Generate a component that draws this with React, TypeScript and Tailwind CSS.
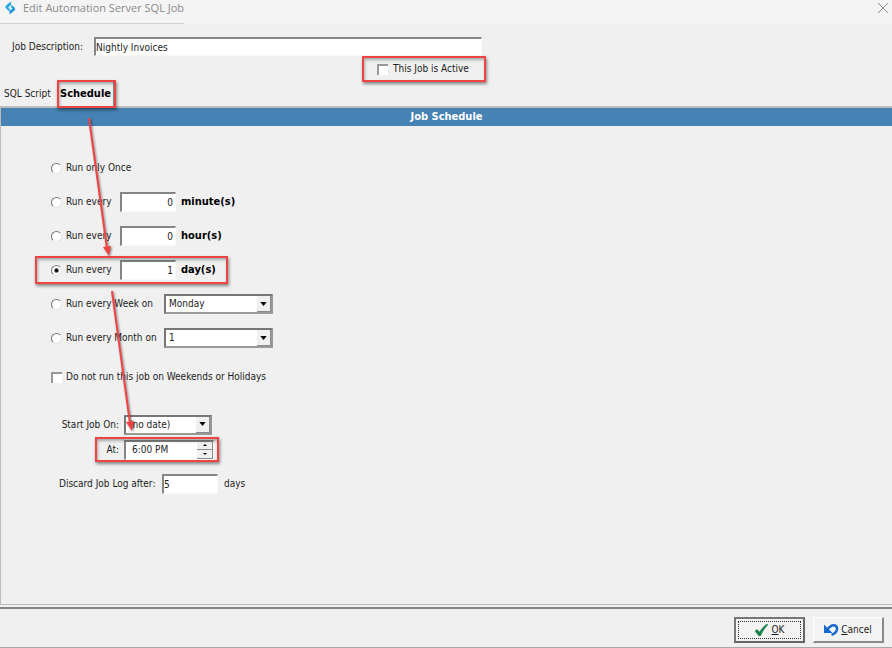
import { useState } from 'react';

const sunken =
  'border-t-2 border-l-2 border-r border-b border-t-[#858585] border-l-[#858585] border-r-[#f8f8f8] border-b-[#f8f8f8] bg-white outline-none';

const radioClass =
  'h-[11px] w-[11px] shrink-0 appearance-none rounded-full border border-t-[#777] border-l-[#777] border-r-[#e4e4e4] border-b-[#e4e4e4] bg-white checked:bg-[radial-gradient(circle,#000_1px,#fff_3px)]';

const checkClass =
  'h-[11px] w-[11px] shrink-0 appearance-none border-t-2 border-l-2 border-t-[#999] border-l-[#999] bg-white checked:bg-[radial-gradient(circle,#000_2px,#fff_3px)]';

// red call-out frame drawn over the control it surrounds
const frame =
  'pointer-events-none absolute z-10 border-2 border-[#f04444] shadow-[1px_2px_3px_rgba(0,0,0,0.45),inset_1px_2px_3px_rgba(0,0,0,0.3)]';

type SelectProps = {
  id: string;
  label: string;
  options: string[];
  className: string;
};

const Select = ({ id, label, options, className }: SelectProps) => (
  <div className={`relative h-5 shrink-0 ${className}`}>
    <select
      id={id}
      aria-label={label}
      className="block h-full w-full appearance-none border-2 border-t-[#777] border-l-[#777] border-r-[#999] border-b-[#999] bg-white pl-[3px] outline-none"
    >
      {options.map((option) => (
        <option key={option}>{option}</option>
      ))}
    </select>
    <span className="pointer-events-none absolute top-[2px] right-[2px] bottom-[2px] flex w-[14px] items-center justify-center border-r border-b border-[#8a8a8a] bg-[#f0f0f0]">
      <svg width="7" height="4" viewBox="0 0 8 5">
        <path d="M0 0h8L4 5z" fill="#000" />
      </svg>
    </span>
  </div>
);

const everyRows = [
  { id: 'minutes', unit: 'minute(s)', value: '0' },
  { id: 'hours', unit: 'hour(s)', value: '0' },
  { id: 'days', unit: 'day(s)', value: '1' },
];

const weekDays = ['Monday', 'Tuesday', 'Wednesday', 'Thursday', 'Friday', 'Saturday', 'Sunday'];
const monthDays = Array.from({ length: 31 }, (_, i) => String(i + 1));

const App: React.FC = () => {
  const [mode, setMode] = useState('days');

  return (
    <div className="relative flex min-h-screen flex-col border-b border-[#a8a8a8] bg-[#f0f0f0] font-['DejaVu_Sans_Condensed','DejaVu_Sans',sans-serif] text-[10px] leading-[14px] text-[#1c1c1c]">
      <header className="flex h-6 items-start justify-between bg-[#f4f4f4]">
        <h1 className="flex h-6 w-[184px] items-center gap-[6px] border-b border-[#d0d0d0] pb-[8px] pl-1 font-['Open_Sans',sans-serif] text-[11px] whitespace-nowrap text-[#8a8a8a]">
          <svg width="13" height="14" viewBox="0 0 13 14" className="shrink-0">
            <path d="M7 0.500L2 4.500Q0.500 6 2 7.500L5.500 10.500L5.800 8.200L4.300 6.300L7 4z" fill="#27a9e1" />
            <path d="M5.500 13.500L10.500 9.500Q12 8 10.500 6.500L7.500 4L7 6L8.400 7.600L5.500 10z" fill="#1b9ad8" />
          </svg>
          Edit Automation Server SQL Job
        </h1>
        <button type="button" aria-label="Close" className="px-1 py-[3px]">
          <svg width="10" height="10" viewBox="0 0 10 10" stroke="#8a8a8a" fill="none">
            <path d="M0 0l10 10M10 0L0 10" />
          </svg>
        </button>
      </header>

      <div className="flex items-center pt-[13px] pl-3">
        <label htmlFor="description" className="w-[82px]">
          Job Description:
        </label>
        <input id="description" defaultValue="Nightly Invoices" className={`h-[19px] w-[388px] ${sunken}`} />
      </div>
      <div className="relative ml-[362px] flex h-[26px] w-[124px] items-center pl-[15px]">
        <label className="flex items-center gap-[5px]">
          <input type="checkbox" className={checkClass} />
          This Job is Active
        </label>
        <span className={`${frame} inset-0`} />
      </div>

      <nav className="flex h-6 pl-1">
        <button type="button" className="w-[56px] text-left">
          SQL Script
        </button>
        <button type="button" className="relative border-r-2 border-[#8a8a8a] pr-[2px] text-[11px] font-bold text-black">
          Schedule
          <span className={`${frame} -inset-x-[3px] -top-[2px] -bottom-[2px]`} />
        </button>
      </nav>

      <main className="flex-1 border-t-2 border-b border-l border-[#bdbdbd]">
        <h2 className="h-[18px] bg-[#4682b4] text-center text-[11px] leading-[18px] font-bold text-white">
          Job Schedule
        </h2>

        <form className="pt-[25px] pl-[50px]">
          <div className="flex h-[34px] items-center">
            <label className="flex items-center gap-1">
              <input
                type="radio"
                name="mode"
                checked={mode === 'once'}
                onChange={() => setMode('once')}
                className={radioClass}
              />
              Run only Once
            </label>
          </div>
          {everyRows.map((row) => (
            <div key={row.id} className="relative flex h-[34px] w-[177px] items-center whitespace-nowrap">
              <label className="flex w-[69px] shrink-0 items-center gap-1">
                <input
                  type="radio"
                  name="mode"
                  checked={mode === row.id}
                  onChange={() => setMode(row.id)}
                  className={radioClass}
                />
                Run every
              </label>
              <input
                id={row.id}
                defaultValue={row.value}
                className={`h-5 w-[56px] shrink-0 pr-[2px] text-right ${sunken}`}
              />
              <label htmlFor={row.id} className="pl-[5px] text-[11px] font-bold text-black">
                {row.unit}
              </label>
              {row.id === 'days' && <span className={`${frame} inset-y-[3px] -left-4 right-0`} />}
            </div>
          ))}
          <div className="flex h-[34px] items-center">
            <label className="flex w-[113px] items-center gap-1 whitespace-nowrap">
              <input
                type="radio"
                name="mode"
                checked={mode === 'week'}
                onChange={() => setMode('week')}
                className={radioClass}
              />
              Run every Week on
            </label>
            <Select id="week" label="Day of week" options={weekDays} className="w-[109px]" />
          </div>
          <div className="flex h-[34px] items-center">
            <label className="flex w-[113px] items-center gap-1 whitespace-nowrap">
              <input
                type="radio"
                name="mode"
                checked={mode === 'month'}
                onChange={() => setMode('month')}
                className={radioClass}
              />
              Run every Month on
            </label>
            <Select id="month" label="Day of month" options={monthDays} className="w-[109px]" />
          </div>

          <div className="mt-[5px] flex h-[34px] items-center">
            <label className="flex items-center gap-1">
              <input type="checkbox" className={checkClass} />
              Do not run this job on Weekends or Holidays
            </label>
          </div>

          <div className="mt-[18px] flex h-[25px] items-center">
            <label htmlFor="start" className="w-[73px] pr-[5px] text-right whitespace-nowrap">
              Start Job On:
            </label>
            <Select id="start" label="Start Job On" options={['(no date)']} className="w-[88px]" />
          </div>
          <div className="relative flex h-[25px] w-[168px] items-center">
            <label htmlFor="at" className="w-[73px] pr-[5px] text-right">
              At:
            </label>
            <div className={`flex h-5 w-[90px] ${sunken}`}>
              <input id="at" defaultValue="6:00 PM" className="w-full min-w-0 pl-[6px] outline-none" />
              <div className="flex w-4 shrink-0 flex-col">
                <button
                  type="button"
                  aria-label="Later"
                  className="flex flex-1 items-center justify-center border-r border-b border-[#8a8a8a] bg-[#f0f0f0]"
                >
                  <svg width="4" height="2" viewBox="0 0 4 2">
                    <path d="M0 2h4L2 0z" />
                  </svg>
                </button>
                <button
                  type="button"
                  aria-label="Earlier"
                  className="flex flex-1 items-center justify-center border-r border-b border-[#8a8a8a] bg-[#f0f0f0]"
                >
                  <svg width="4" height="2" viewBox="0 0 4 2">
                    <path d="M0 0h4L2 2z" />
                  </svg>
                </button>
              </div>
            </div>
            <span className={`${frame} inset-y-0 right-0 left-11`} />
          </div>

          <div className="mt-[5px] flex h-[34px] items-center">
            <label htmlFor="discard" className="w-[111px] pl-2 whitespace-nowrap">
              Discard Job Log after:
            </label>
            <input id="discard" defaultValue="5" className={`h-5 w-[56px] ${sunken}`} />
            <span className="pl-[6px]">days</span>
          </div>
        </form>
      </main>

      <footer className="mt-[2px] flex h-10 items-end justify-end gap-2 border-t-2 border-[#858585] pr-2 pb-1">
        <button
          type="button"
          className="h-[26px] w-[71px] border-2 border-t-[#777] border-l-[#777] border-r-[#666] border-b-[#666] bg-[#f3f3f3] p-[2px]"
        >
          <span className="flex h-full items-center justify-center gap-1 border border-dotted border-[#333]">
            <svg width="13" height="12" viewBox="0 0 13 12">
              <path d="M0 7l2-1.500L4.500 8Q7.500 3 12 0l1 .5Q8 5.500 5.500 12H4z" fill="#178048" stroke="#178048" strokeWidth="0.500" />
            </svg>
            <span>
              <u>O</u>K
            </span>
          </span>
        </button>
        <button
          type="button"
          className="flex h-[26px] w-[71px] items-center justify-center gap-[2px] border-t border-l border-r-2 border-b-2 border-t-white border-l-white border-r-[#8a8a8a] border-b-[#8a8a8a] bg-[#f3f3f3]"
        >
          <svg width="15" height="13" viewBox="0 0 15 13">
            <path d="M0 1.500L2.500 4L0 1.500V10H8.500L0 1.500z" fill="#1667d0" />
            <path d="M3.500 6.500Q6.500 2 10 2.200Q13.500 2.800 13 6.500Q12 10.500 7.500 11.800" fill="none" stroke="#1667d0" strokeWidth="2.500" />
          </svg>
          <span>
            <u>C</u>ancel
          </span>
        </button>
      </footer>

      {/* arrows from the tab to the interval and start time */}
      <svg
        width="160"
        height="440"
        viewBox="0 0 160 440"
        className="pointer-events-none absolute top-0 left-0 z-20 drop-shadow-[1px_1px_1px_rgba(0,0,0,0.45)]"
        stroke="#f04444"
        fill="#f04444"
      >
        <path d="M89 118L107 248" strokeWidth="2" />
        <path d="M103 247l8-1l-2 10z" stroke="none" />
        <path d="M112 291L130 423" strokeWidth="2" />
        <path d="M126 422l8-1l-2 10z" stroke="none" />
      </svg>
    </div>
  );
};

export default App;
